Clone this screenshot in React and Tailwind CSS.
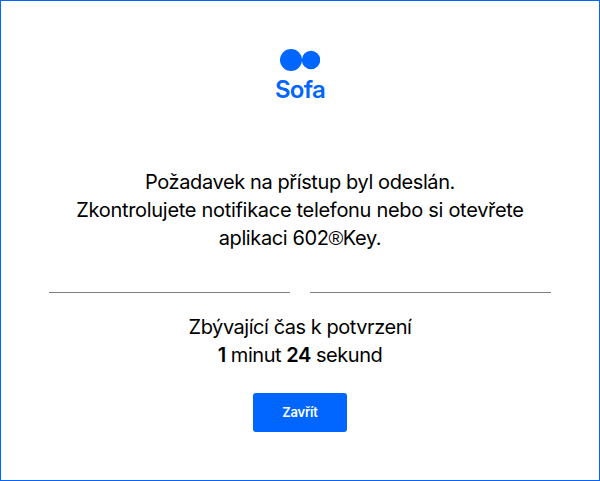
import React from 'react';

const Logo = () => (
  <div className="flex flex-col items-center text-[#0066ff]">
    <svg width="40" height="22" viewBox="0 0 40 22" fill="currentColor" className="block shrink-0">
      <circle cx="11" cy="11" r="11" />
      <circle cx="31" cy="11" r="9.2" />
    </svg>
    <div className="mt-[5px] text-[24px] leading-[28px] font-semibold tracking-[-0.7px]">Sofa</div>
  </div>
);

const AccessRequest = ({ minutes, seconds }) => {
  return (
    <div className="flex h-[481px] w-[600px] flex-col items-center border border-[#0066ff] bg-white pt-12 font-['Inter','Liberation_Sans',sans-serif] text-black">
      <Logo />
      <p className="mt-16 w-[502px] text-center text-[20px] leading-[28px] tracking-[-0.3px]">
        <span className="tracking-[-0.4px]">Požadavek na přístup byl odeslán.</span>
        <br />
        Zkontrolujete notifikace telefonu nebo si otevřete
        <br />
        <span className="tracking-[-0.4px]">
          aplikaci 602<span className="font-['Liberation_Sans',sans-serif] leading-none">®</span>Key.
        </span>
      </p>
      <div className="mt-10 grid w-[502px] grid-cols-2 gap-5">
        <div className="border-t border-[#808080]" />
        <div className="border-t border-[#808080]" />
      </div>
      <p className="mt-5 text-center text-[20px] leading-[28px] tracking-[-0.46px]">
        Zbývající čas k potvrzení
        <br />
        <b className="font-semibold">{minutes}</b> minut <b className="font-semibold">{seconds}</b> sekund
      </p>
      <button
        type="button"
        className="mt-6 h-[39px] w-[94px] rounded-[3px] bg-[#0066ff] text-[13px] font-semibold tracking-[-0.2px] text-white"
      >
        Zavřít
      </button>
    </div>
  );
};

export default function App() {
  return <AccessRequest minutes={1} seconds={24} />;
}
